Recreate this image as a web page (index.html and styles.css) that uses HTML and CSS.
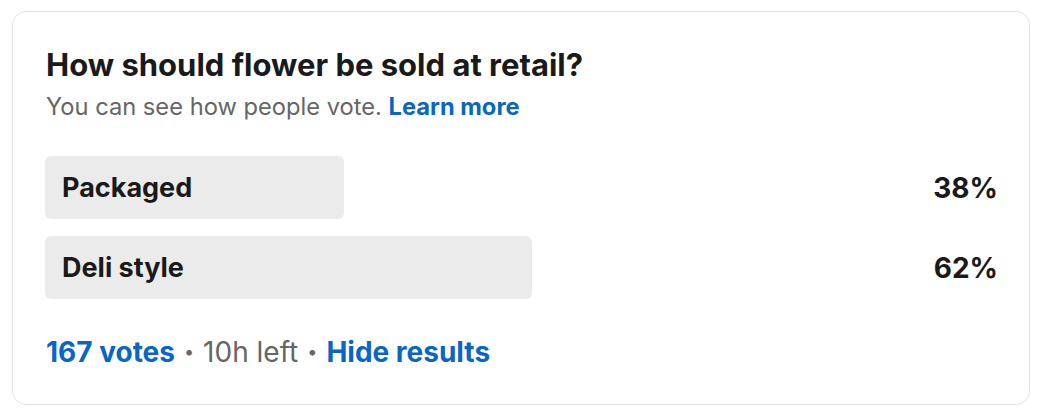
FILE: index.html
```html
<!DOCTYPE html>
<html lang="en">
<head>
<meta charset="utf-8">
<link rel="stylesheet" href="styles.css">
</head>
<body>
<div class="card">
  <h2 class="title">How should flower be sold at retail?</h2>
  <p class="sub">You can see how people vote. <a class="link" href="#">Learn more</a></p>
  <div class="options">
    <div class="row">
      <div class="track"><div class="bar" style="width:38%"><span class="label">Packaged</span></div></div>
      <div class="pct">38%</div>
    </div>
    <div class="row">
      <div class="track"><div class="bar" style="width:62%"><span class="label">Deli style</span></div></div>
      <div class="pct">62%</div>
    </div>
  </div>
  <div class="footer">
    <a class="link" href="#">167 votes</a>
    <span class="dot">•</span>
    <span class="muted">10h left</span>
    <span class="dot">•</span>
    <a class="link" href="#">Hide results</a>
  </div>
</div>
</body>
</html>
```
FILE: styles.css
```css
* { box-sizing: border-box; }
html, body { margin: 0; padding: 0; background: #fff; }
body {
  font-family: Inter, "Noto Sans", "Liberation Sans", sans-serif;
  color: #1a1a1a;
  padding: 11px 10px 13px 12px;
}
.card {
  border: 1px solid #e3e3e3;
  border-radius: 14px;
  padding: 34px 31px 20px 32px;
  height: 394px;
}
.title {
  margin: 0;
  font-size: 31px;
  line-height: 38px;
  font-weight: 700;
  color: #1a1a1a;
  padding-left: 1px;
}
.sub {
  margin: 7px 0 0;
  font-size: 23.7px;
  line-height: 32px;
  color: #666;
  padding-left: 1px;
}
.link {
  color: #0a66c2;
  font-weight: 700;
  text-decoration: none;
}
.options {
  margin-top: 33px;
  display: flex;
  flex-direction: column;
  gap: 17px;
}
.row {
  display: flex;
  align-items: center;
}
.track {
  width: 786px;
}
.bar {
  height: 63px;
  background: #ebebeb;
  border-radius: 6px;
  display: flex;
  align-items: center;
  padding-left: 17px;
  white-space: nowrap;
}
.label {
  font-size: 27px;
  font-weight: 700;
  color: #1a1a1a;
}
.pct {
  flex: 1;
  text-align: right;
  font-size: 28px;
  font-weight: 700;
  color: #1a1a1a;
}
.footer {
  margin-top: 35px;
  font-size: 28px;
  line-height: 36px;
  display: flex;
  align-items: center;
  gap: 9px;
  padding-left: 1px;
}
.muted { color: #666; }
.dot { color: #666; font-size: 18px; }
```
